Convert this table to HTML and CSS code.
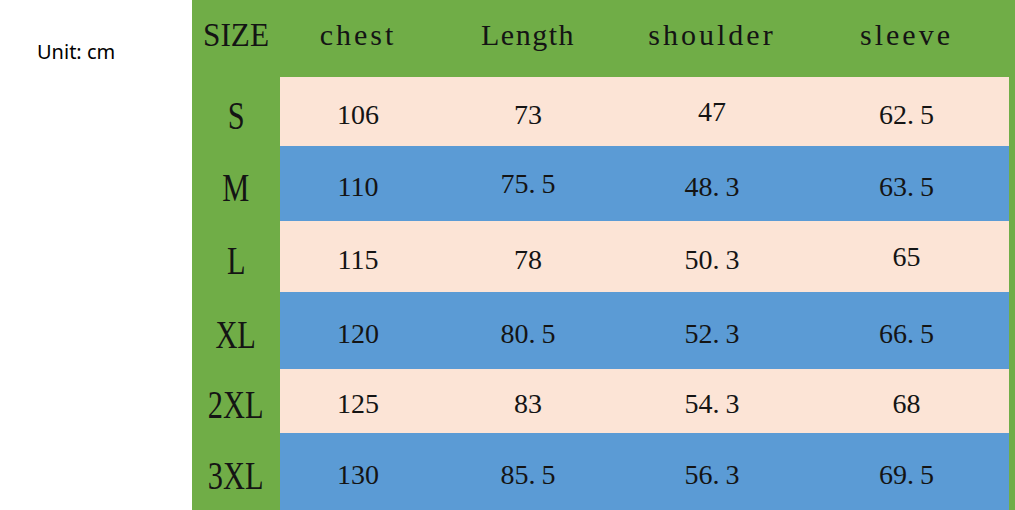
FILE: index.html
```html
<!DOCTYPE html>
<html>
<head>
<meta charset="utf-8">
<link rel="stylesheet" href="styles.css">
</head>
<body>
<div class="page">
  <div class="unit">Unit: cm</div>
  <div class="chart">
    <div class="grid">
      <div class="h size-h">SIZE</div>
      <div class="h">chest</div>
      <div class="h narrow">Length</div>
      <div class="h">shoulder</div>
      <div class="h">sleeve</div>

      <div class="lab r1"><span>S</span></div>
      <div class="c pink r1">106</div>
      <div class="c pink r1">73</div>
      <div class="c pink r1 up">47</div>
      <div class="c pink r1">62<span class="dot">.</span>5</div>

      <div class="lab r2"><span>M</span></div>
      <div class="c blue r2">110</div>
      <div class="c blue r2 up">75<span class="dot">.</span>5</div>
      <div class="c blue r2">48<span class="dot">.</span>3</div>
      <div class="c blue r2">63<span class="dot">.</span>5</div>

      <div class="lab r3"><span>L</span></div>
      <div class="c pink r3">115</div>
      <div class="c pink r3">78</div>
      <div class="c pink r3">50<span class="dot">.</span>3</div>
      <div class="c pink r3 up">65</div>

      <div class="lab r4"><span>XL</span></div>
      <div class="c blue r4">120</div>
      <div class="c blue r4">80<span class="dot">.</span>5</div>
      <div class="c blue r4">52<span class="dot">.</span>3</div>
      <div class="c blue r4">66<span class="dot">.</span>5</div>

      <div class="lab r5"><span>2XL</span></div>
      <div class="c pink r5">125</div>
      <div class="c pink r5">83</div>
      <div class="c pink r5">54<span class="dot">.</span>3</div>
      <div class="c pink r5">68</div>

      <div class="lab r6"><span>3XL</span></div>
      <div class="c blue r6">130</div>
      <div class="c blue r6">85<span class="dot">.</span>5</div>
      <div class="c blue r6">56<span class="dot">.</span>3</div>
      <div class="c blue r6">69<span class="dot">.</span>5</div>
    </div>
  </div>
</div>
</body>
</html>
```

FILE: styles.css
```css
html, body {
  margin: 0;
  padding: 0;
  background: #ffffff;
}
.page {
  display: flex;
  width: 1015px;
  height: 510px;
  overflow: hidden;
}
.unit {
  width: 192px;
  box-sizing: border-box;
  padding-left: 37px;
  padding-top: 38px;
  font-family: "Noto Sans", "Open Sans", sans-serif;
  font-size: 20px;
  color: #000;
}
.chart {
  width: 823px;
  height: 510px;
  background: #70ad47;
  padding-right: 6px;
  box-sizing: border-box;
}
.grid {
  display: grid;
  grid-template-columns: 88px 156px 184px 184px 205px;
  grid-template-rows: 77px 69px 75px 71px 77px 64px 77px;
  font-family: "Liberation Serif", "Times New Roman", serif;
  color: #141414;
}
.h {
  display: flex;
  align-items: center;
  justify-content: center;
  padding-bottom: 7px;
  font-size: 30px;
  letter-spacing: 3px;
}
.h.narrow {
  letter-spacing: 1.5px;
}
.size-h {
  font-size: 34px;
  letter-spacing: 0;
  transform: scaleX(0.92);
}
.lab {
  display: flex;
  align-items: center;
  justify-content: center;
  padding-top: 7px;
  font-size: 40px;
}
.lab span {
  display: inline-block;
  transform: scaleX(0.76);
}
.c {
  display: flex;
  align-items: center;
  justify-content: center;
  padding-top: 6px;
  font-size: 28px;
}
.c.up {
  padding-top: 0;
}
.dot {
  display: inline-block;
  width: 13px;
  text-align: left;
}
.pink {
  background: #fce4d6;
}
.blue {
  background: #5b9bd5;
}
```
